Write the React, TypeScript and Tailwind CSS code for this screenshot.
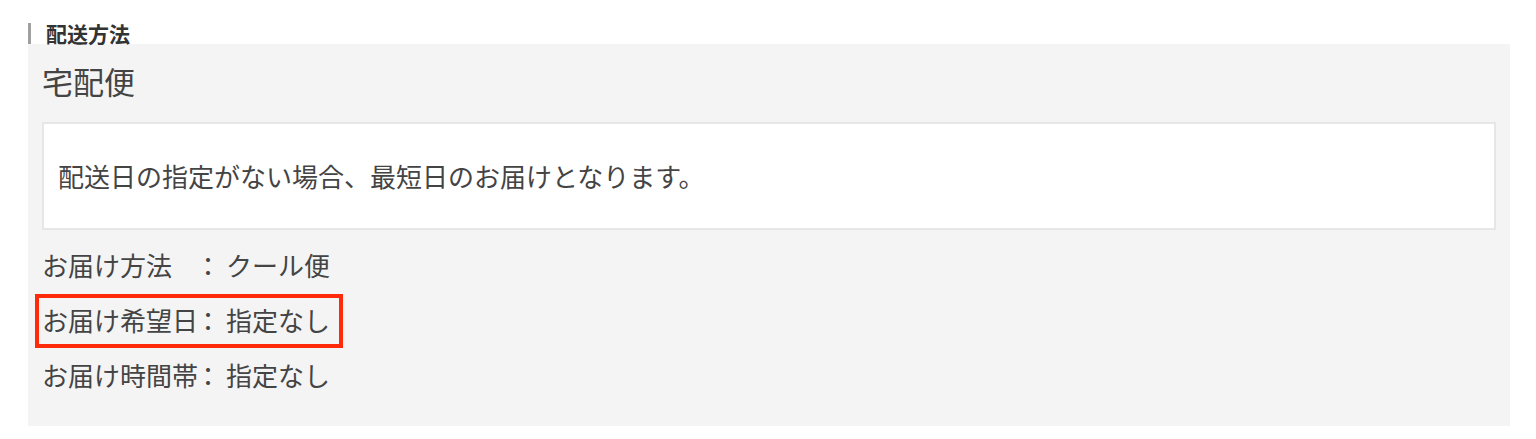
const font = { fontFamily: '"Noto Sans CJK JP", "Noto Sans", sans-serif' }

const rows = [
  { label: 'お届け方法　', value: 'クール便', marked: false },
  { label: 'お届け希望日', value: '指定なし', marked: true },
  { label: 'お届け時間帯', value: '指定なし', marked: false },
]

export default function App() {
  return (
    <div className="min-h-screen bg-white pl-[28px] pr-[26px] pt-[23px] text-[#333]" style={font}>
      {/* Section heading */}
      <div className="border-l-[3px] border-[#a0a0a0] pl-[15px] text-[21px] font-bold leading-[21px] text-[#333]">
        配送方法
      </div>

      {/* Panel */}
      <div className="bg-[#f4f4f4] px-[14px] pt-[17px] pb-[24px]">
        <div className="text-[31px] leading-[40px] text-[#444]">宅配便</div>

        <div className="mt-[21px] border-2 border-[#e6e6e6] bg-white px-[14px] py-[34px] text-[26px] leading-[36px] text-[#444]">
          配送日の指定がない場合、最短日のお届けとなります。
        </div>

        <div className="mt-[7px]">
          {rows.map((row) => (
            <div key={row.label} className="relative text-[26px] leading-[55px] text-[#444]">
              {row.label}
              <span className="-ml-[3px] mr-[5px]">：</span>
              {row.value}
              {row.marked && (
                <div className="pointer-events-none absolute left-[-7px] top-[2px] h-[54px] w-[308px] border-4 border-[#ff2a0a]" />
              )}
            </div>
          ))}
        </div>
      </div>
    </div>
  )
}
